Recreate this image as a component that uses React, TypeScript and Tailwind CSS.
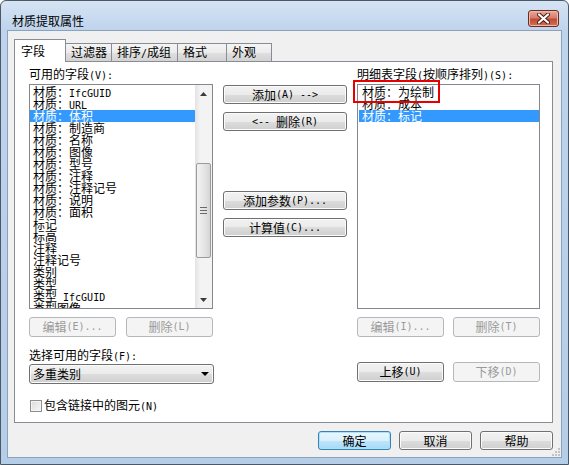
import React from "react";

const MONO = "font-['DejaVu_Sans_Mono',monospace] text-[10px] whitespace-pre";

// SimSun-like look: CJK at 12px, ASCII runs as 6px-wide mono
function Txt({ s }: { s: string }) {
    const parts = s.split(/([\x20-\x7e]+)/);
    return (
        <>
            {parts.map((p, i) =>
                p === "" ? null : /^[\x20-\x7e]+$/.test(p) ? (
                    <span key={i} className={MONO}>
                        {p}
                    </span>
                ) : (
                    <span key={i}>{p}</span>
                )
            )}
        </>
    );
}

type BtnProps = {
    label: string;
    className?: string;
    disabled?: boolean;
    primary?: boolean;
};

function Btn({ label, className = "", disabled, primary }: BtnProps) {
    const look = disabled
        ? "border-[#b5b7b9] bg-[#f4f4f4] text-[#9a9a9a]"
        : primary
        ? "border-[#3c7fb1] bg-[linear-gradient(#eaf6fd,#d9f0fc_50%,#bee6fd_50%,#a7d9f5)] text-black shadow-[inset_0_0_0_1px_#a9e3fb]"
        : "border-[#707070] bg-[linear-gradient(#f2f2f2,#ebebeb_50%,#dddddd_50%,#cfcfcf)] text-black shadow-[inset_0_0_0_1px_#fbfbfb]";
    return (
        <div
            className={`flex shrink-0 items-center justify-center rounded-[3px] border leading-[12px] ${look} ${className}`}
        >
            <Txt s={label} />
        </div>
    );
}

const leftItems: string[] = [
    "材质：IfcGUID",
    "材质：URL",
    "材质：体积",
    "材质：制造商",
    "材质：名称",
    "材质：图像",
    "材质：型号",
    "材质：注释",
    "材质：注释记号",
    "材质：说明",
    "材质：面积",
    "标记",
    "标高",
    "注释",
    "注释记号",
    "类别",
    "类型",
    "类型 IfcGUID",
    "类型图像",
];

const rightItems: string[] = ["材质：为绘制", "材质：成本", "材质：标记"];

const tabs = [
    { name: "过滤器", w: "w-[46px]" },
    { name: "排序/成组", w: "w-[66px]" },
    { name: "格式", w: "w-[49px]" },
    { name: "外观", w: "w-[45px]" },
];

function ListItem({ text, selected }: { text: string; selected?: boolean }) {
    return (
        <div
            className={`h-[12px] shrink-0 whitespace-nowrap pl-[3px] leading-[12px] ${
                selected ? "bg-[#3399ff] text-white" : "text-black"
            }`}
        >
            <Txt s={text} />
        </div>
    );
}

function Arrow({ up }: { up?: boolean }) {
    return (
        <svg width="7" height="4" viewBox="0 0 7 4">
            <polygon
                points={up ? "3.5,0 7,4 0,4" : "0,0 7,0 3.5,4"}
                fill="#3a3a3a"
            />
        </svg>
    );
}

function ScrollBar() {
    return (
        <div className="flex w-[17px] shrink-0 flex-col bg-[linear-gradient(90deg,#e3e3e3,#f3f3f3_30%,#f3f3f3)]">
            <div className="flex h-[17px] items-center justify-center">
                <Arrow up />
            </div>
            <div className="flex-1">
                <div className="mx-[1px] mt-[61px] flex h-[95px] flex-col items-center justify-center gap-[2px] rounded-[2px] border border-[#9b9b9b] bg-[linear-gradient(90deg,#f3f3f3,#e6e6e6_50%,#d6d6d6)]">
                    <div className="h-[1px] w-[7px] bg-[#6a6a6a]" />
                    <div className="h-[1px] w-[7px] bg-[#6a6a6a]" />
                    <div className="h-[1px] w-[7px] bg-[#6a6a6a]" />
                </div>
            </div>
            <div className="flex h-[17px] items-center justify-center">
                <Arrow />
            </div>
        </div>
    );
}

export default function App() {
    return (
        <div className="relative flex h-[465px] w-[569px] flex-col overflow-hidden rounded-t-[6px] border border-[#4a5868] bg-[linear-gradient(#d6e4f4,#bed3ec_30px,#b6cde8)] px-[6px] pb-[6px] font-['Noto_Sans_CJK_SC',sans-serif] text-[12px] text-black">
            {/* title bar */}
            <div className="flex h-[29px] shrink-0 items-start">
                <div className="mt-[12px] pl-[5px] leading-[16px]">材质提取属性</div>
                <div className="ml-auto mr-[3px] mt-[9px] flex h-[17px] w-[31px] items-center justify-center rounded-[3px] border border-[#6b2a20] bg-[linear-gradient(#e8a99a,#d47f6c_45%,#c24a32_55%,#d0705a)] shadow-[inset_0_0_0_1px_#f0b8aa]">
                    <svg width="13" height="11" viewBox="0 0 13 11">
                        <path
                            d="M2 1.5 L11 9.5 M11 1.5 L2 9.5"
                            stroke="#4a1b12"
                            strokeWidth="4"
                            strokeLinecap="round"
                        />
                        <path
                            d="M2 1.5 L11 9.5 M11 1.5 L2 9.5"
                            stroke="#ffffff"
                            strokeWidth="2.2"
                            strokeLinecap="round"
                        />
                    </svg>
                </div>
            </div>

            {/* client area */}
            <div className="relative flex flex-1 flex-col border border-[#8ba2bd] bg-[#f0f0f0]">
                {/* tab strip */}
                <div className="flex h-[30px] shrink-0 items-end pl-[6px]">
                    <div className="relative z-10 mb-[-1px] h-[23px] w-[52px] border-x border-t border-[#898c95] bg-white pl-[6px] pt-[5px] leading-[12px]">
                        字段
                    </div>
                    {tabs.map((t) => (
                        <div
                            key={t.name}
                            className={`h-[18px] ${t.w} border-r border-t border-[#898c95] bg-[linear-gradient(#f4f4f4,#ececec_50%,#e0e0e0_50%,#d3d3d3)] pl-[5px] pt-[2px] leading-[12px]`}
                        >
                            <Txt s={t.name} />
                        </div>
                    ))}
                </div>

                {/* tab panel */}
                <div className="ml-[6px] flex h-[362px] w-[539px] shrink-0 border border-[#898c95] bg-white pl-[14px]">
                    {/* left column */}
                    <div className="flex w-[184px] shrink-0 flex-col pt-[6px]">
                        <div className="h-[12px] leading-[12px]">
                            <Txt s="可用的字段(V):" />
                        </div>
                        <div className="mt-[4px] flex h-[225px] border border-[#828790] bg-white">
                            <div className="flex flex-1 flex-col overflow-hidden pt-[1px]">
                                {leftItems.map((it, i) => (
                                    <ListItem key={i} text={it} selected={i === 2} />
                                ))}
                            </div>
                            <ScrollBar />
                        </div>
                        <div className="mt-[8px] flex justify-between">
                            <Btn label="编辑(E)..." disabled className="h-[20px] w-[87px]" />
                            <Btn label="删除(L)" disabled className="h-[20px] w-[87px]" />
                        </div>
                        <div className="mt-[12px] h-[12px] leading-[12px]">
                            <Txt s="选择可用的字段(F):" />
                        </div>
                        <div className="mt-[3px] flex h-[20px] w-[185px] shrink-0 items-center rounded-[3px] border border-[#707070] bg-[linear-gradient(#f2f2f2,#ebebeb_50%,#dddddd_50%,#cfcfcf)] pl-[3px] pr-[4px] leading-[12px] shadow-[inset_0_0_0_1px_#fbfbfb]">
                            <span>多重类别</span>
                            <svg className="ml-auto" width="8" height="4" viewBox="0 0 8 4">
                                <polygon points="0,0 8,0 4,4" fill="#000" />
                            </svg>
                        </div>
                        <div className="mt-[15px] flex items-center pl-[1px]">
                            <div className="h-[12px] w-[12px] border border-[#8e8f8f] bg-[linear-gradient(135deg,#dcdcdc,#f7f7f7)] shadow-[inset_0_0_0_1px_#f4f4f4]" />
                            <div className="ml-[2px] leading-[12px]">
                                <Txt s="包含链接中的图元(N)" />
                            </div>
                        </div>
                    </div>

                    {/* middle column */}
                    <div className="ml-[10px] flex w-[124px] shrink-0 flex-col pt-[23px]">
                        <Btn label="添加(A) -->" className="h-[19px] w-full" />
                        <Btn label="<-- 删除(R)" className="mt-[8px] h-[19px] w-full" />
                        <Btn label="添加参数(P)..." className="mt-[60px] h-[19px] w-full" />
                        <Btn label="计算值(C)..." className="mt-[8px] h-[19px] w-full" />
                    </div>

                    {/* right column */}
                    <div className="ml-[10px] flex w-[183px] shrink-0 flex-col pt-[6px]">
                        <div className="h-[12px] whitespace-nowrap leading-[12px]">
                            <Txt s="明细表字段(按顺序排列)(S):" />
                        </div>
                        <div className="mt-[4px] flex h-[225px] flex-col overflow-hidden border border-[#828790] bg-white pl-[1px] pt-[1px]">
                            {rightItems.map((it, i) => (
                                <ListItem key={i} text={it} selected={i === 2} />
                            ))}
                        </div>
                        <div className="mt-[8px] flex justify-between">
                            <Btn label="编辑(I)..." disabled className="h-[20px] w-[87px]" />
                            <Btn label="删除(T)" disabled className="h-[20px] w-[87px]" />
                        </div>
                        <div className="mt-[25px] flex justify-between">
                            <Btn label="上移(U)" className="h-[20px] w-[87px]" />
                            <Btn label="下移(D)" disabled className="h-[20px] w-[87px]" />
                        </div>
                    </div>
                </div>

                {/* dialog buttons */}
                <div className="mt-[8px] flex justify-end gap-[8px] pr-[8px]">
                    <Btn label="确定" primary className="h-[19px] w-[73px]" />
                    <Btn label="取消" className="h-[19px] w-[73px]" />
                    <Btn label="帮助" className="h-[19px] w-[73px]" />
                </div>

                {/* size grip */}
                <svg className="absolute bottom-[1px] right-[1px]" width="9" height="9" viewBox="0 0 9 9">
                    <rect x="7" y="1" width="2" height="2" fill="#c3c3c3" />
                    <rect x="4" y="4" width="2" height="2" fill="#c3c3c3" />
                    <rect x="7" y="4" width="2" height="2" fill="#c3c3c3" />
                    <rect x="1" y="7" width="2" height="2" fill="#c3c3c3" />
                    <rect x="4" y="7" width="2" height="2" fill="#c3c3c3" />
                    <rect x="7" y="7" width="2" height="2" fill="#c3c3c3" />
                </svg>
            </div>

            {/* red annotation box */}
            <div className="absolute left-[352px] top-[79px] h-[23px] w-[87px] border-2 border-[#e60000]" />
        </div>
    );
}
